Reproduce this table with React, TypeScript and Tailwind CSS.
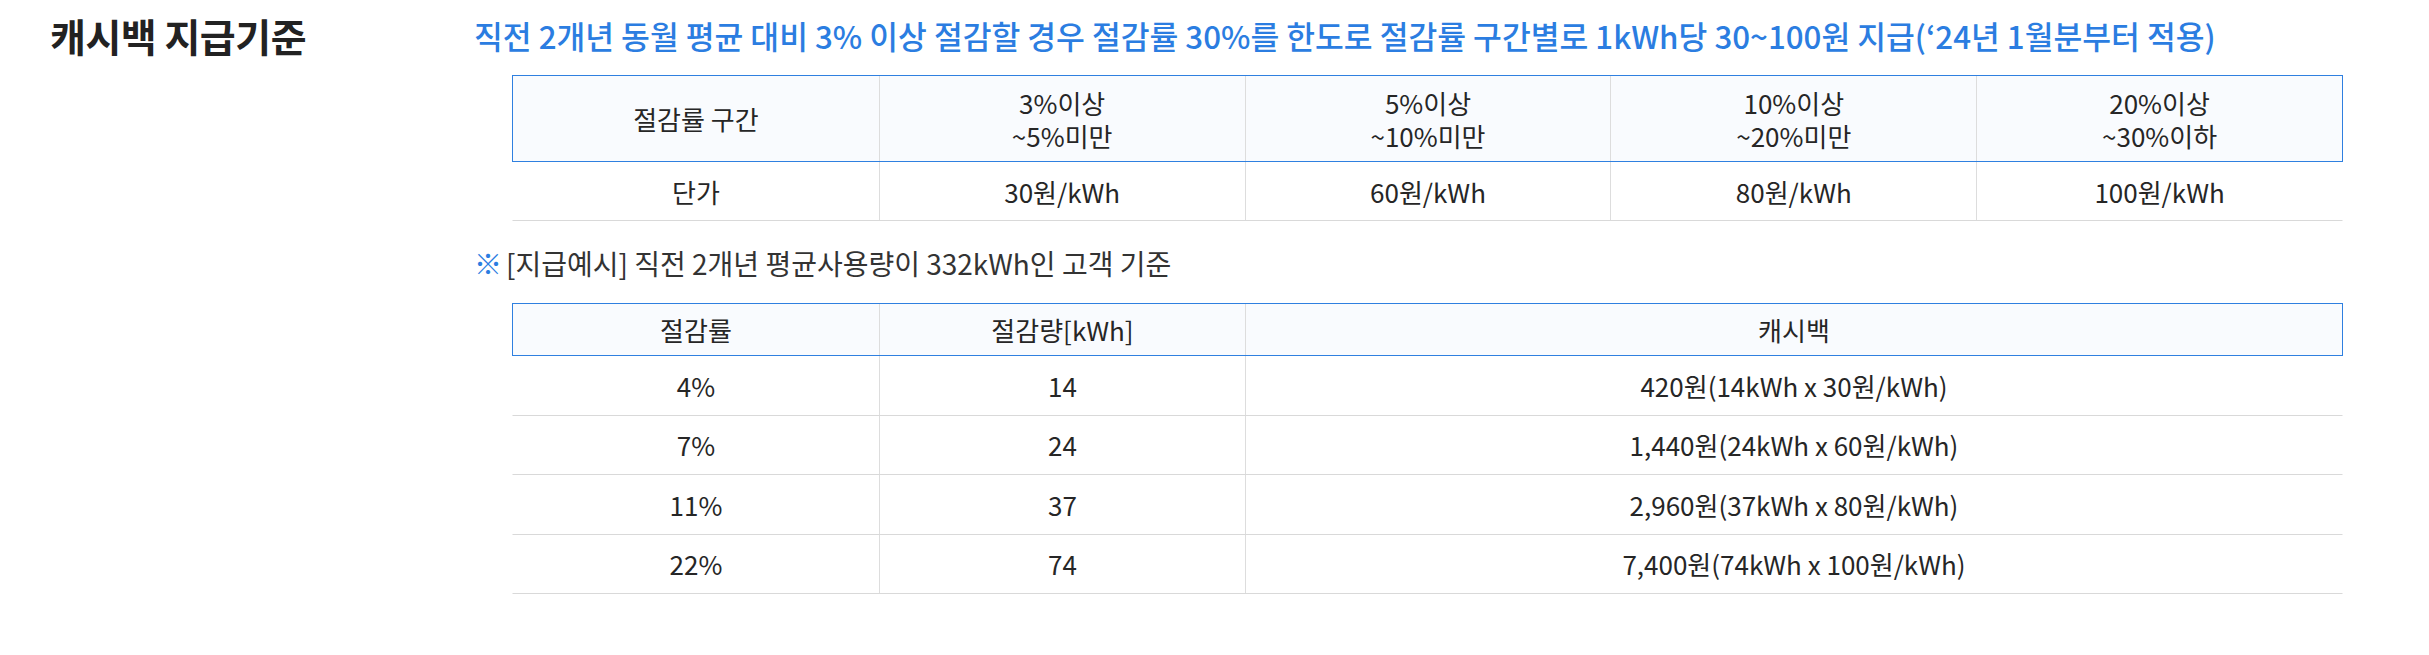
import React from 'react';

const font = { fontFamily: '"Noto Sans CJK KR", "Noto Sans", sans-serif' };

const ranges = [
    { label: '3%이상', sub: '~5%미만', price: '30원/kWh' },
    { label: '5%이상', sub: '~10%미만', price: '60원/kWh' },
    { label: '10%이상', sub: '~20%미만', price: '80원/kWh' },
    { label: '20%이상', sub: '~30%이하', price: '100원/kWh' },
];

const examples = [
    { rate: '4%', amount: '14', cash: '420원(14kWh x 30원/kWh)' },
    { rate: '7%', amount: '24', cash: '1,440원(24kWh x 60원/kWh)' },
    { rate: '11%', amount: '37', cash: '2,960원(37kWh x 80원/kWh)' },
    { rate: '22%', amount: '74', cash: '7,400원(74kWh x 100원/kWh)' },
];

export default function App() {
    return (
        <div className="w-[2429px] h-[655px] bg-white text-[#262626]" style={font}>
            <div className="flex pl-[50px] pt-[9px]">
                <h2 className="w-[424px] shrink-0 text-[39px] font-bold leading-[52px] text-[#222] tracking-[-0.5px]">
                    캐시백 지급기준
                </h2>

                <div className="w-[1869px] shrink-0">
                    <p className="text-[31.3px] font-medium leading-[54px] text-[#2b7de1]">
                        직전 2개년 동월 평균 대비 3% 이상 절감할 경우 절감률 30%를 한도로 절감률 구간별로 1kWh당 30~100원 지급(‘24년 1월분부터 적용)
                    </p>

                    {/* 절감률 구간별 단가 */}
                    <div className="ml-[38px] mt-[12px] text-[26px]">
                        <div className="grid grid-cols-5 h-[87px] border-[1.5px] border-[#2f80e0] bg-[#f9fbfe]">
                            <div className="flex items-center justify-center">절감률 구간</div>
                            {ranges.map((r) => (
                                <div key={r.label} className="flex flex-col items-center justify-center border-l border-[#dddddd] leading-[33px]">
                                    <span>{r.label}</span>
                                    <span>{r.sub}</span>
                                </div>
                            ))}
                        </div>
                        <div className="grid grid-cols-5 h-[59px] border-b border-x-[1.5px] border-x-transparent border-b-[#d9d9d9]">
                            <div className="flex items-center justify-center">단가</div>
                            {ranges.map((r) => (
                                <div key={r.price} className="flex items-center justify-center border-l border-[#dddddd]">
                                    {r.price}
                                </div>
                            ))}
                        </div>
                    </div>

                    <p className="mt-[22px] text-[28px] leading-[40px] text-[#333]">
                        <span className="text-[#2b7de1] mr-[4px]">※</span>[지급예시] 직전 2개년 평균사용량이 332kWh인 고객 기준
                    </p>

                    {/* 지급예시 */}
                    <div className="ml-[38px] mt-[20px] text-[26px]">
                        <div className="grid grid-cols-[366px_366px_1fr] h-[53px] border-[1.5px] border-[#2f80e0] bg-[#f9fbfe]">
                            <div className="flex items-center justify-center">절감률</div>
                            <div className="flex items-center justify-center border-l border-[#dddddd]">절감량[kWh]</div>
                            <div className="flex items-center justify-center border-l border-[#dddddd]">캐시백</div>
                        </div>
                        {examples.map((e) => (
                            <div key={e.rate} className="grid grid-cols-[366px_366px_1fr] h-[59.5px] border-b border-x-[1.5px] border-x-transparent border-b-[#d9d9d9]">
                                <div className="flex items-center justify-center">{e.rate}</div>
                                <div className="flex items-center justify-center border-l border-[#dddddd]">{e.amount}</div>
                                <div className="flex items-center justify-center border-l border-[#dddddd]">{e.cash}</div>
                            </div>
                        ))}
                    </div>
                </div>
            </div>
        </div>
    );
}
